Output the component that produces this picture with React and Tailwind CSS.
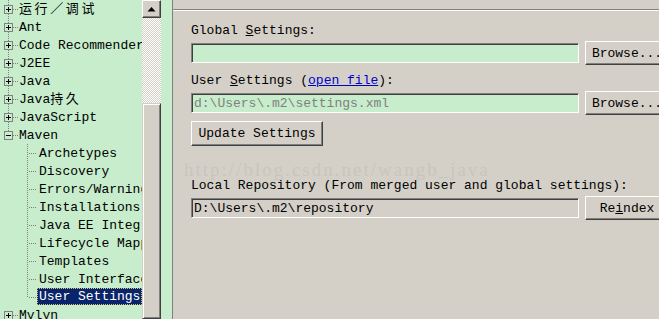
import React from "react";

const GREEN = "bg-[#c7edcc]";

const topItems = [
  { label: <span className="tracking-[2.6px]">运行／调试</span> },
  { label: "Ant" },
  { label: "Code Recommenders" },
  { label: "J2EE" },
  { label: "Java" },
  { label: <>Java<span className="tracking-[2.6px]">持久</span></> },
  { label: "JavaScript" },
];

const mavenChildren = [
  "Archetypes",
  "Discovery",
  "Errors/Warnings",
  "Installations",
  "Java EE Integration",
  "Lifecycle Mappings",
  "Templates",
  "User Interface",
  "User Settings",
];

function Expander({ open, lineAbove = true, lineBelow = true }) {
  return (
    <svg width="19" height="18" className="shrink-0">
      {lineAbove && (
        <line x1="8.5" y1="0" x2="8.5" y2="5" stroke="#808080" strokeDasharray="1 1" />
      )}
      {lineBelow && (
        <line x1="8.5" y1="14" x2="8.5" y2="18" stroke="#808080" strokeDasharray="1 1" />
      )}
      <line x1="13" y1="9.5" x2="19" y2="9.5" stroke="#808080" strokeDasharray="1 1" />
      <rect x="4.5" y="5.5" width="8" height="8" fill="#c7edcc" stroke="#808080" />
      <line x1="6" y1="9.5" x2="11" y2="9.5" stroke="#000" />
      {!open && <line x1="8.5" y1="7" x2="8.5" y2="12" stroke="#000" />}
    </svg>
  );
}

function ChildGuide({ last }) {
  return (
    <svg width="37" height="18" className="shrink-0">
      <line
        x1="27.5"
        y1="0"
        x2="27.5"
        y2={last ? 10 : 18}
        stroke="#808080"
        strokeDasharray="1 1"
      />
      <line x1="29" y1="9.5" x2="37" y2="9.5" stroke="#808080" strokeDasharray="1 1" />
    </svg>
  );
}

function Tree() {
  return (
    <div className={`w-[142px] shrink-0 overflow-hidden ${GREEN} whitespace-nowrap text-black`}>
      {topItems.map((it, i) => (
        <div key={i} className="h-[18px] flex">
          <Expander open={false} lineAbove={true} lineBelow={true} />
          <span className="pt-[2px] leading-[16px]">{it.label}</span>
        </div>
      ))}
      <div className="h-[18px] flex">
        <Expander open={true} lineBelow={false} />
        <span className="pt-[2px] leading-[16px]">Maven</span>
      </div>
      {mavenChildren.map((c, i) => {
        const selected = c === "User Settings";
        return (
          <div key={c} className="h-[18px] flex">
            <ChildGuide last={i === mavenChildren.length - 1} />
            {selected ? (
              <span className="h-[17px] flex-1 pl-[1px] pt-[1px] leading-[14px] bg-[#0a246a] text-white border border-dotted border-[#d8c27a]">
                {c}
              </span>
            ) : (
              <span className="pl-[2px] pt-[2px] leading-[16px]">{c}</span>
            )}
          </div>
        );
      })}
      <div className="h-[18px] flex">
        <Expander open={false} lineAbove={false} />
        <span className="pt-[2px] leading-[16px]">Mylyn</span>
      </div>
    </div>
  );
}

function ScrollBar() {
  return (
    <div className="w-[19px] shrink-0 flex flex-col">
      <div className="h-[18px] bg-[#d4d0c8] border border-t-white border-l-white border-b-[#404040] border-r-[#404040] shadow-[inset_-1px_-1px_0_#808080]">
        <svg width="17" height="16">
          <polygon points="4.5,10.5 12.5,10.5 8.5,6" fill="#000" />
        </svg>
      </div>
      <div className="h-[85px] bg-[image:repeating-conic-gradient(#d4d0c8_0%_25%,#ffffff_0%_50%)] bg-[length:2px_2px]" />
      <div className="flex-1 bg-[#d4d0c8] border border-t-[#d4d0c8] border-l-[#d4d0c8] border-b-[#404040] border-r-[#404040] shadow-[inset_1px_1px_0_#ffffff,inset_-1px_-1px_0_#808080]" />
    </div>
  );
}

const sunken =
  "border border-t-[#808080] border-l-[#808080] border-b-white border-r-white shadow-[inset_1px_1px_0_#404040]";
const raised =
  "bg-[#d4d0c8] border border-t-white border-l-white border-b-[#404040] border-r-[#404040] shadow-[inset_-1px_-1px_0_#808080]";

function Field({ value, dim, fill }) {
  return (
    <div
      className={`w-[388px] h-[20px] shrink-0 pl-[2px] pt-[1px] leading-[18px] whitespace-nowrap overflow-hidden ${sunken} ${fill} ${
        dim ? "text-[#808080]" : "text-black"
      }`}
    >
      {value}
    </div>
  );
}

function Button({ children, className = "" }) {
  return (
    <div
      className={`h-[24px] shrink-0 flex items-center justify-center pt-[1px] whitespace-nowrap ${raised} ${className}`}
    >
      {children}
    </div>
  );
}

function SettingsPanel() {
  return (
    <div className="flex-1 relative overflow-hidden bg-[#d4d0c8] pt-[9px] flex flex-col">
      <div className="h-[2px] border-t border-t-[#808080] border-b border-b-white" />
      <div className="pl-[18px] flex flex-col">
        <div className="mt-[12px] h-[15px] leading-[15px] whitespace-nowrap">
          Global <span className="underline">S</span>ettings:
        </div>
        <div className="mt-[3px] h-[24px] flex items-center gap-[6px]">
          <Field value="" fill={GREEN} />
          <Button className="w-[84px]">Browse...</Button>
        </div>
        <div className="mt-[8px] h-[15px] leading-[15px] whitespace-nowrap">
          User <span className="underline">S</span>ettings (
          <span className="text-[#0000cc] underline">open file</span>):
        </div>
        <div className="mt-[3px] h-[24px] flex items-center gap-[6px]">
          <Field value="d:\Users\.m2\settings.xml" dim fill={GREEN} />
          <Button className="w-[84px]">Browse...</Button>
        </div>
        <Button className="mt-[6px] w-[132px] h-[25px]">Update Settings</Button>
        <div className="mt-[32px] h-[15px] leading-[15px] whitespace-nowrap">
          Local Repository (From merged user and global settings):
        </div>
        <div className="mt-[3px] h-[24px] flex items-center gap-[6px]">
          <Field value="D:\Users\.m2\repository" fill="bg-[#d4d0c8]" />
          <Button className="w-[84px]">
            Re<span className="underline">i</span>ndex
          </Button>
        </div>
      </div>
      <div className="absolute left-[11px] top-[159px] text-[19px] leading-[22px] tracking-[2px] text-[#c9c5bd] whitespace-nowrap pointer-events-none font-['Liberation_Serif',serif]">
        http://blog.csdn.net/wangb_java
      </div>
    </div>
  );
}

export default function App() {
  return (
    <div className="w-[659px] h-[319px] overflow-hidden flex bg-[#d4d0c8] text-[13px] font-['Liberation_Mono','Noto_Sans_CJK_SC',monospace]">
      <Tree />
      <ScrollBar />
      <div className={`w-[12px] shrink-0 ${GREEN} border-r border-r-[#808080]`} />
      <SettingsPanel />
    </div>
  );
}
